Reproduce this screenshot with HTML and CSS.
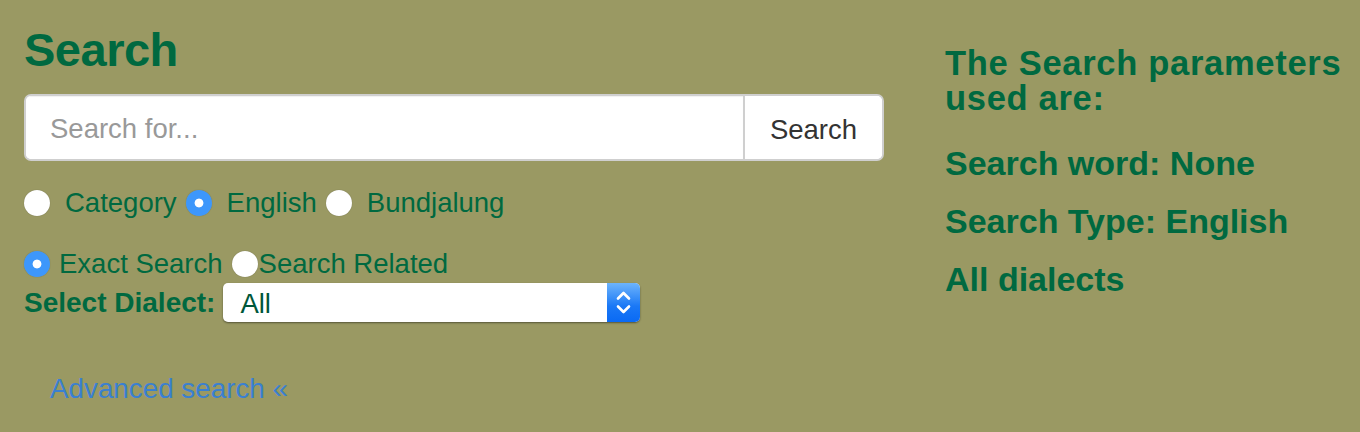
FILE: index.html
```html
<!DOCTYPE html>
<html lang="en">
<head>
<meta charset="utf-8">
<title>Search</title>
<link rel="stylesheet" href="styles.css">
</head>
<body>
<div class="page">
  <div class="search-col">
    <h1 class="title">Search</h1>
    <form class="input-group">
      <input class="search-input" type="text" placeholder="Search for...">
      <button class="search-btn" type="button">Search</button>
    </form>
    <div class="radio-row row-type">
      <label class="opt"><input type="radio" name="type"><span>Category</span></label>
      <label class="opt"><input type="radio" name="type" checked><span>English</span></label>
      <label class="opt"><input type="radio" name="type"><span>Bundjalung</span></label>
    </div>
    <div class="radio-row row-mode">
      <label class="opt"><input type="radio" name="mode" checked><span>Exact Search</span></label>
      <label class="opt tight"><input type="radio" name="mode"><span>Search Related</span></label>
    </div>
    <div class="dialect-row">
      <span class="dialect-label">Select Dialect:</span>
      <div class="select-wrap">
        <select class="dialect-select">
          <option>All</option>
        </select>
        <span class="stepper">
          <svg width="33" height="39" viewBox="0 0 33 39">
            <path d="M11 15.5 L16.5 10 L22 15.5" fill="none" stroke="#fff" stroke-width="2.6" stroke-linecap="round" stroke-linejoin="round"/>
            <path d="M11 23.5 L16.5 29 L22 23.5" fill="none" stroke="#fff" stroke-width="2.6" stroke-linecap="round" stroke-linejoin="round"/>
          </svg>
        </span>
      </div>
    </div>
    <a class="advanced" href="#">Advanced search &laquo;</a>
  </div>
  <div class="params">
    <h2 class="params-title">The Search parameters used are:</h2>
    <p class="param">Search word: None</p>
    <p class="param">Search Type: English</p>
    <p class="param">All dialects</p>
  </div>
</div>
</body>
</html>
```

FILE: styles.css
```css
html, body {
  margin: 0;
  padding: 0;
  background: #9a9963;
}
body {
  font-family: "Liberation Sans", Arial, sans-serif;
  color: #006940;
  width: 1360px;
  height: 432px;
  overflow: hidden;
}
.page {
  display: flex;
  padding: 0 0 0 24px;
}
.search-col {
  width: 860px;
  flex: none;
  display: flex;
  flex-direction: column;
  align-items: flex-start;
}
.title {
  margin: 24px 0 0;
  font-size: 47px;
  line-height: 52px;
  font-weight: bold;
  letter-spacing: -0.5px;
  color: #006940;
}
.input-group {
  margin: 18px 0 0;
  display: flex;
  width: 860px;
  height: 67px;
  box-sizing: border-box;
  border: 2px solid #cfcfcf;
  border-radius: 7px;
  background: #fff;
  overflow: hidden;
}
.search-input {
  flex: 1;
  border: 0;
  outline: none;
  padding: 3px 0 0 24px;
  font-family: inherit;
  font-size: 27.5px;
  color: #555;
  background: #fff;
  box-shadow: inset 0 1px 1px rgba(0,0,0,0.06);
}
.search-input::placeholder {
  color: #999;
}
.search-btn {
  width: 139px;
  border: 0;
  border-left: 2px solid #cfcfcf;
  background: #fff;
  font-family: inherit;
  font-size: 27.5px;
  color: #333;
  padding: 4px 0 0;
}
.radio-row {
  display: flex;
  align-items: center;
  height: 30px;
  gap: 9px;
}
.row-type {
  margin-top: 27px;
}
.row-mode {
  margin-top: 31px;
}
.opt {
  display: inline-flex;
  align-items: center;
  font-size: 27.5px;
  gap: 15px;
}
.row-mode .opt {
  gap: 9px;
}
.row-mode .opt.tight {
  gap: 1px;
}
.opt input {
  appearance: none;
  -webkit-appearance: none;
  margin: 0;
  width: 26px;
  height: 26px;
  border-radius: 50%;
  background: #fff;
  box-shadow: 0 0 1px rgba(0,0,0,0.35);
}
.opt input:checked {
  background: radial-gradient(circle, #fff 0 4px, #3d97fb 4.8px);
}
.dialect-row {
  margin-top: 4px;
  display: flex;
  align-items: center;
  gap: 8px;
}
.dialect-label {
  font-size: 28px;
  font-weight: bold;
}
.select-wrap {
  position: relative;
  width: 417px;
  height: 39px;
}
.dialect-select {
  appearance: none;
  -webkit-appearance: none;
  width: 100%;
  height: 100%;
  border: 0;
  border-radius: 5px;
  background: #fff;
  box-shadow: 0 1px 2px rgba(0,0,0,0.45);
  padding: 2px 0 0 17px;
  font-family: inherit;
  font-size: 27.5px;
  color: #00573a;
  outline: none;
}
.stepper {
  position: absolute;
  right: 0;
  top: 0;
  width: 33px;
  height: 39px;
  border-radius: 0 5px 5px 0;
  background: linear-gradient(#6db4fb, #1a78f6 60%, #0a6af4);
  pointer-events: none;
  display: flex;
}
.advanced {
  margin: 51px 0 0 26px;
  font-size: 27.8px;
  color: #3a80d1;
  text-decoration: none;
  line-height: 32px;
}
.params {
  margin-left: 61px;
  flex: 1;
  display: flex;
  flex-direction: column;
  gap: 18px;
}
.params-title {
  margin: 46px 0 9px;
  font-size: 34.5px;
  line-height: 35px;
  font-weight: bold;
  letter-spacing: 0.7px;
}
.param {
  margin: 0;
  font-size: 34px;
  line-height: 40px;
  font-weight: bold;
}
```
